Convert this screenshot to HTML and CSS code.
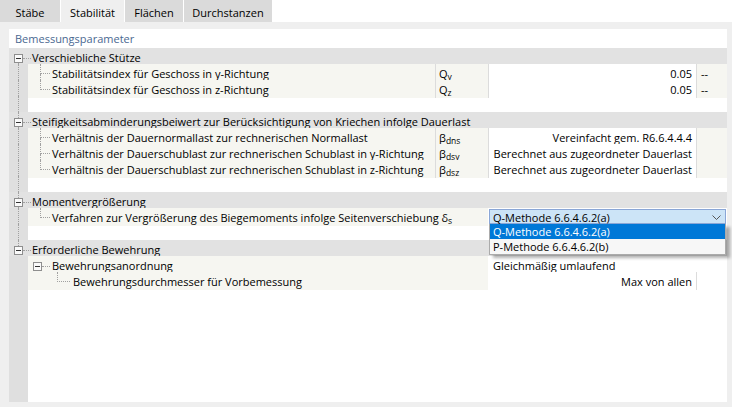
FILE: index.html
```html
<!DOCTYPE html>
<html lang="de">
<head>
<meta charset="utf-8">
<title>Stabilität</title>
<link rel="stylesheet" href="styles.css">
</head>
<body>
<div class="tabs">
  <div class="tab tab-staebe">Stäbe</div>
  <div class="tab tab-stab active">Stabilität</div>
  <div class="tab tab-flaechen">Flächen</div>
  <div class="tab tab-durch">Durchstanzen</div>
</div>
<div class="panel">
  <div class="sheet">
    <div class="title">Bemessungsparameter</div>

    <div class="row group">
      <div class="node"><span class="seg-top"></span><span class="box"></span><span class="seg-bot line"></span></div>
      <span class="hconn"></span>
      <span class="gtext">Verschiebliche Stütze</span>
    </div>
    <div class="row item">
      <div class="gut"><span class="vline"></span></div>
      <div class="label"><span class="conn lvl1"><span class="conn-top"></span><span class="conn-bot line"></span></span><span class="txt">Stabilitätsindex für Geschoss in y-Richtung</span></div>
      <div class="sym">Q<sub>y</sub></div>
      <div class="val right">0.05</div>
      <div class="unit">--</div>
    </div>
    <div class="row item">
      <div class="gut"><span class="vline"></span></div>
      <div class="label"><span class="conn lvl1"><span class="conn-top"></span><span class="conn-bot"></span></span><span class="txt">Stabilitätsindex für Geschoss in z-Richtung</span></div>
      <div class="sym">Q<sub>z</sub></div>
      <div class="val right">0.05</div>
      <div class="unit">--</div>
    </div>
    <div class="row blank">
      <div class="gut"><span class="vline"></span></div>
    </div>

    <div class="row group">
      <div class="node"><span class="seg-top line"></span><span class="box"></span><span class="seg-bot line"></span></div>
      <span class="hconn"></span>
      <span class="gtext">Steifigkeitsabminderungsbeiwert zur Berücksichtigung von Kriechen infolge Dauerlast</span>
    </div>
    <div class="row item">
      <div class="gut"><span class="vline"></span></div>
      <div class="label"><span class="conn lvl1"><span class="conn-top"></span><span class="conn-bot line"></span></span><span class="txt">Verhältnis der Dauernormallast zur rechnerischen Normallast</span></div>
      <div class="sym">β<sub>dns</sub></div>
      <div class="val right">Vereinfacht gem. R6.6.4.4.4</div>
      <div class="unit"></div>
    </div>
    <div class="row item">
      <div class="gut"><span class="vline"></span></div>
      <div class="label"><span class="conn lvl1"><span class="conn-top"></span><span class="conn-bot line"></span></span><span class="txt">Verhältnis der Dauerschublast zur rechnerischen Schublast in y-Richtung</span></div>
      <div class="sym">β<sub>dsy</sub></div>
      <div class="val right">Berechnet aus zugeordneter Dauerlast</div>
      <div class="unit"></div>
    </div>
    <div class="row item">
      <div class="gut"><span class="vline"></span></div>
      <div class="label"><span class="conn lvl1"><span class="conn-top"></span><span class="conn-bot"></span></span><span class="txt">Verhältnis der Dauerschublast zur rechnerischen Schublast in z-Richtung</span></div>
      <div class="sym">β<sub>dsz</sub></div>
      <div class="val right">Berechnet aus zugeordneter Dauerlast</div>
      <div class="unit"></div>
    </div>
    <div class="row blank">
      <div class="gut"><span class="vline"></span></div>
    </div>

    <div class="row group">
      <div class="node"><span class="seg-top line"></span><span class="box"></span><span class="seg-bot line"></span></div>
      <span class="hconn"></span>
      <span class="gtext">Momentvergrößerung</span>
    </div>
    <div class="row item">
      <div class="gut"><span class="vline"></span></div>
      <div class="label wide"><span class="conn lvl1"><span class="conn-top"></span><span class="conn-bot"></span></span><span class="txt">Verfahren zur Vergrößerung des Biegemoments infolge Seitenverschiebung δ<sub>s</sub></span></div>
      <div class="val combo-cell">
        <div class="combo">
          <span class="combo-text">Q-Methode 6.6.4.6.2(a)</span>
          <svg class="chev" width="9" height="5" viewBox="0 0 9 5"><polyline points="0.5,0.5 4.5,4.5 8.5,0.5" fill="none" stroke="#555" stroke-width="1"/></svg>
          <div class="combo-list">
            <div class="opt selected">Q-Methode 6.6.4.6.2(a)</div>
            <div class="opt">P-Methode 6.6.4.6.2(b)</div>
          </div>
        </div>
      </div>
    </div>
    <div class="row blank">
      <div class="gut"><span class="vline"></span></div>
    </div>

    <div class="row group">
      <div class="node"><span class="seg-top line"></span><span class="box"></span><span class="seg-bot"></span></div>
      <span class="hconn"></span>
      <span class="gtext">Erforderliche Bewehrung</span>
    </div>
    <div class="row item">
      <div class="gut"></div>
      <div class="label wide"><span class="node sub"><span class="seg-top"></span><span class="box"></span><span class="seg-bot"></span></span><span class="hconn"></span><span class="txt">Bewehrungsanordnung</span></div>
      <div class="val span2 noline">Gleichmäßig umlaufend</div>
    </div>
    <div class="row item">
      <div class="gut"></div>
      <div class="label wide"><span class="conn lvl2"><span class="conn-top"></span><span class="conn-bot"></span></span><span class="txt">Bewehrungsdurchmesser für Vorbemessung</span></div>
      <div class="val right noline">Max von allen</div>
      <div class="unit plain"></div>
    </div>

    <div class="filler">
      <div class="gut"></div>
    </div>
  </div>
</div>
</body>
</html>
```

FILE: styles.css
```css
* { box-sizing: border-box; }

html, body {
  margin: 0;
  padding: 0;
}

body {
  width: 732px;
  height: 407px;
  overflow: hidden;
  background: #efefef;
  font-family: "Open Sans", "Noto Sans", sans-serif;
  font-size: 11px;
  color: #000;
}

/* ---------- tabs ---------- */
.tabs {
  display: flex;
  gap: 1px;
  height: 22px;
  background: #fff;
}

.tab {
  height: 22px;
  padding-top: 3px;
  line-height: 19px;
  text-align: center;
  background: #dadada;
}

.tab.active { background: #efefef; }
.tab-staebe { width: 60px; }
.tab-stab { width: 63px; }
.tab-flaechen { width: 58px; }
.tab-durch { width: 88px; }

/* ---------- panel ---------- */
.panel {
  height: 385px;
  padding: 7px 5px 5px 9px;
}

.sheet {
  height: 100%;
  background: #fff;
  display: flex;
  flex-direction: column;
}

.title {
  height: 19px;
  padding: 2px 0 0 6px;
  line-height: 16px;
  color: #4a6891;
}

/* ---------- rows ---------- */
.row {
  height: 16px;
  flex: none;
}

.row.group {
  display: flex;
  align-items: flex-start;
  background: #e2e2e2;
}

.row.item,
.row.blank {
  display: grid;
  grid-template-columns: 19px 407px 53px 208px 31px;
}

.gut {
  background: #dfdfdf;
  display: flex;
  justify-content: center;
}

.vline {
  width: 0;
  height: 100%;
  border-left: 1px dotted #a0a0a0;
}

/* expand/collapse node */
.node {
  width: 9px;
  height: 16px;
  margin-left: 5px;
  display: flex;
  flex-direction: column;
  align-items: center;
  flex: none;
}

.seg-top {
  width: 0;
  height: 6px;
  flex: none;
}

.seg-bot {
  width: 0;
  flex: 1;
}

.seg-top.line,
.seg-bot.line { border-left: 1px dotted #a0a0a0; }

.box {
  width: 9px;
  height: 9px;
  flex: none;
  border: 1px solid #8e8e8e;
  background: #fafafa;
  display: flex;
  align-items: center;
  justify-content: center;
}

.box::before {
  content: "";
  width: 5px;
  height: 1px;
  background: #333;
}

.hconn {
  width: 8px;
  height: 11px;
  margin-right: 1px;
  border-bottom: 1px dotted #a0a0a0;
  flex: none;
}

.gtext,
.txt {
  padding-top: 2px;
  line-height: 16px;
  white-space: nowrap;
}

/* label cell */
.label {
  background: #f6f6f1;
  display: flex;
  align-items: flex-start;
  white-space: nowrap;
}

.label.wide { grid-column: span 2; }

.conn {
  height: 16px;
  display: flex;
  flex-direction: column;
  flex: none;
}

.conn.lvl1 {
  width: 10px;
  margin: 0 2px 0 12px;
}

.conn.lvl2 {
  width: 13px;
  margin: 0 3px 0 29px;
}

.conn-top {
  height: 10px;
  border-left: 1px dotted #a0a0a0;
  border-bottom: 1px dotted #a0a0a0;
}

.conn-bot { flex: 1; }
.conn-bot.line { border-left: 1px dotted #a0a0a0; }

.label .hconn { margin-right: 2px; }

/* other cells */
.sym,
.val,
.unit {
  padding-top: 2px;
  line-height: 16px;
  white-space: nowrap;
  border-left: 1px solid #dcdcdc;
}

.val.noline { border-left-color: #fff; }

.sym {
  background: #f6f6f1;
  padding-left: 3px;
}

sub {
  font-size: 8.5px;
  vertical-align: -2px;
  line-height: 0;
}

.val {
  background: #fff;
  padding-left: 4px;
  padding-right: 4px;
}

.val.right { text-align: right; }
.val.span2 { grid-column: span 2; }

.unit {
  background: #f6f6f1;
  padding-left: 4px;
}

.unit.plain { background: #fff; }

/* combobox */
.val.combo-cell {
  grid-column: span 2;
  padding: 1px 1px 0 1px;
  border-left: 0;
}

.combo {
  position: relative;
  height: 15px;
  border: 1px solid #8aa6d6;
  background: #cce4f7;
  display: flex;
  align-items: center;
  padding-left: 3px;
  line-height: 13px;
}

.combo-text {
  flex: 1;
  padding-top: 1px;
}

.chev {
  margin-right: 4px;
  margin-top: 1px;
}

.combo-list {
  position: absolute;
  top: 14px;
  left: -1px;
  right: -1px;
  border: 1px solid #ababab;
  border-top: 0;
  background: #f7f7f7;
  box-shadow: 4px 3px 3px rgba(0, 0, 0, 0.3);
  z-index: 2;
}

.opt {
  height: 15px;
  line-height: 15px;
  padding-left: 3px;
}

.opt.selected {
  background: #0078d7;
  color: #fff;
}

/* filler */
.filler {
  flex: 1;
  display: grid;
  grid-template-columns: 19px 1fr;
}
```
